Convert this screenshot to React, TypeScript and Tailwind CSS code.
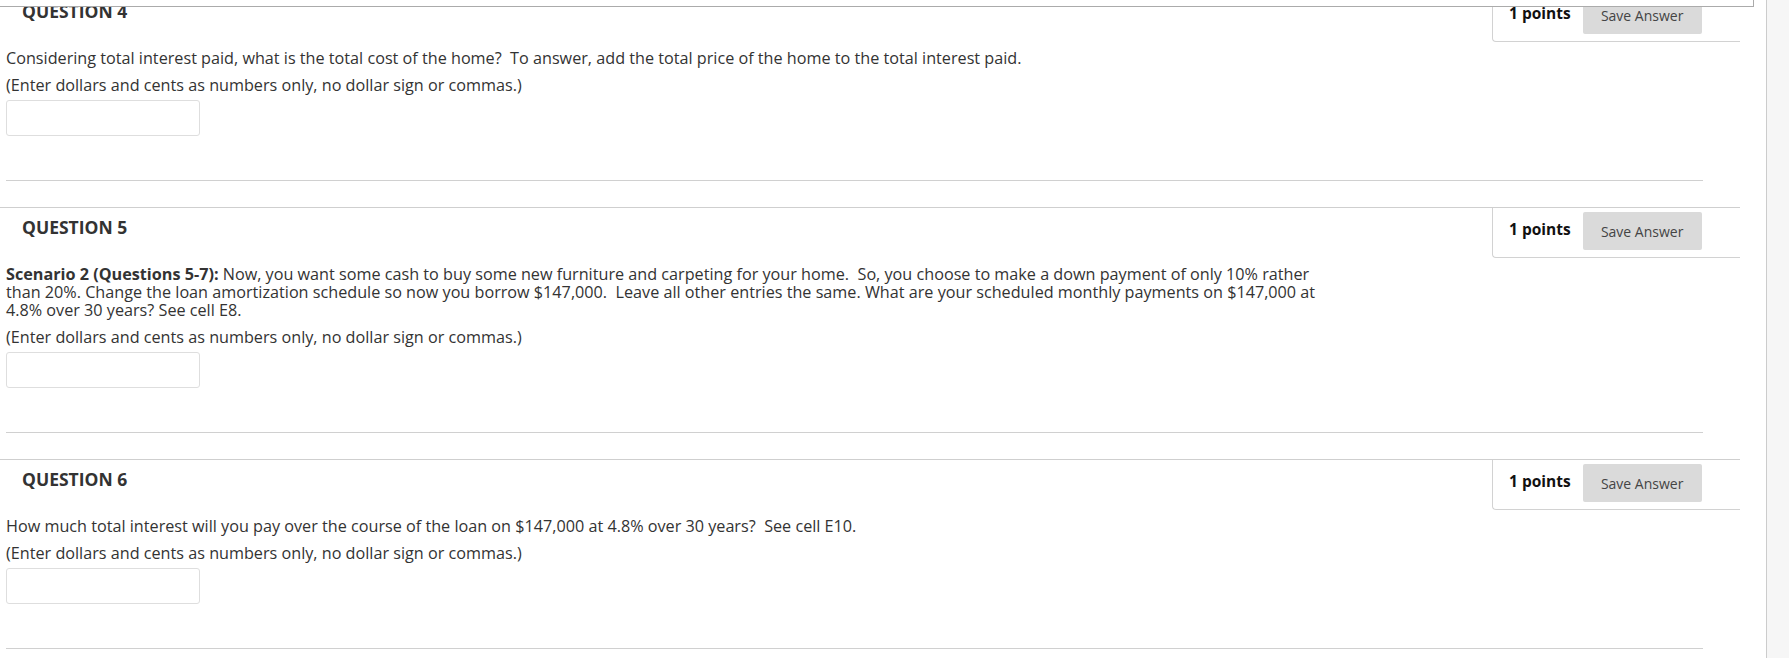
import React from "react";

type Question = {
  num: number;
  body: React.ReactNode;
};

const hint = "(Enter dollars and cents as numbers only, no dollar sign or commas.)";

const questions: Question[] = [
  {
    num: 4,
    body: (
      <p>
        Considering total interest paid, what is the total cost of the home?{"\u00a0 "}To answer, add the
        total price of the home to the total interest paid.
      </p>
    ),
  },
  {
    num: 5,
    body: (
      <p>
        <strong className="font-bold">Scenario 2 (Questions 5-7):</strong> Now, you want some cash to buy
        some new furniture and carpeting for your home.{"\u00a0 "}So, you choose to make a down payment of
        only 10% rather than 20%. Change the loan amortization schedule so now you borrow $147,000.
        {"\u00a0 "}Leave all other entries the same. What are your scheduled monthly payments on $147,000 at
        4.8% over 30 years? See cell E8.
      </p>
    ),
  },
  {
    num: 6,
    body: (
      <p>
        How much total interest will you pay over the course of the loan on $147,000 at 4.8% over 30
        years?{"\u00a0 "}See cell E10.
      </p>
    ),
  },
];

function QuestionBlock({ q }: { q: Question }) {
  return (
    <div>
      <div className="flex justify-between border-t border-[#cfcfcf]">
        <h3 className="pl-[22px] pt-[7px] text-[17.5px] leading-[24px] font-bold text-[#333]">
          QUESTION {q.num}
        </h3>
        <div className="flex items-start w-[248px] h-[50px] pt-[4px] pl-[16px] border-l border-b border-[#d2d2d2] rounded-bl-[4px]">
          <span className="text-[15.5px] leading-[34px] font-bold text-[#111] whitespace-nowrap">1 points</span>
          <button className="ml-[12px] w-[119px] h-[38px] rounded-[2px] bg-[#dadada] text-[14px] text-[#444]">
            Save Answer
          </button>
        </div>
      </div>

      <div className="pl-[6px] pt-[7px]">
        <div className="max-w-[1330px] text-[16.2px] leading-[18px] text-[#333]">
          {q.body}
          <p className="mt-[9px]">{hint}</p>
        </div>
        <input
          type="text"
          className="block mt-[6px] w-[194px] h-[36px] rounded-[3px] border border-[#dedede] bg-white"
        />
      </div>

      <div className="mt-[44px] ml-[6px] w-[1697px] border-t border-[#d0d0d0] mb-[26px]" />
    </div>
  );
}

export default function App() {
  return (
    <div className="relative h-[658px] overflow-hidden bg-white font-['Open_Sans',sans-serif]">
      <div className="flex h-full">
        <div className="w-[1766px] shrink-0">
          <div className="w-[1740px] -mt-[9px]">
            {questions.map((q) => (
              <QuestionBlock key={q.num} q={q} />
            ))}
          </div>
        </div>
        <div className="flex-1 border-l border-[#cccccc] bg-[#f6f6f6]" />
      </div>

      {/* fixed bar above the scrolled list */}
      <div className="absolute top-0 left-0 w-[1754px] h-[7px] bg-white border-b border-r border-[#ababab]" />
    </div>
  );
}
